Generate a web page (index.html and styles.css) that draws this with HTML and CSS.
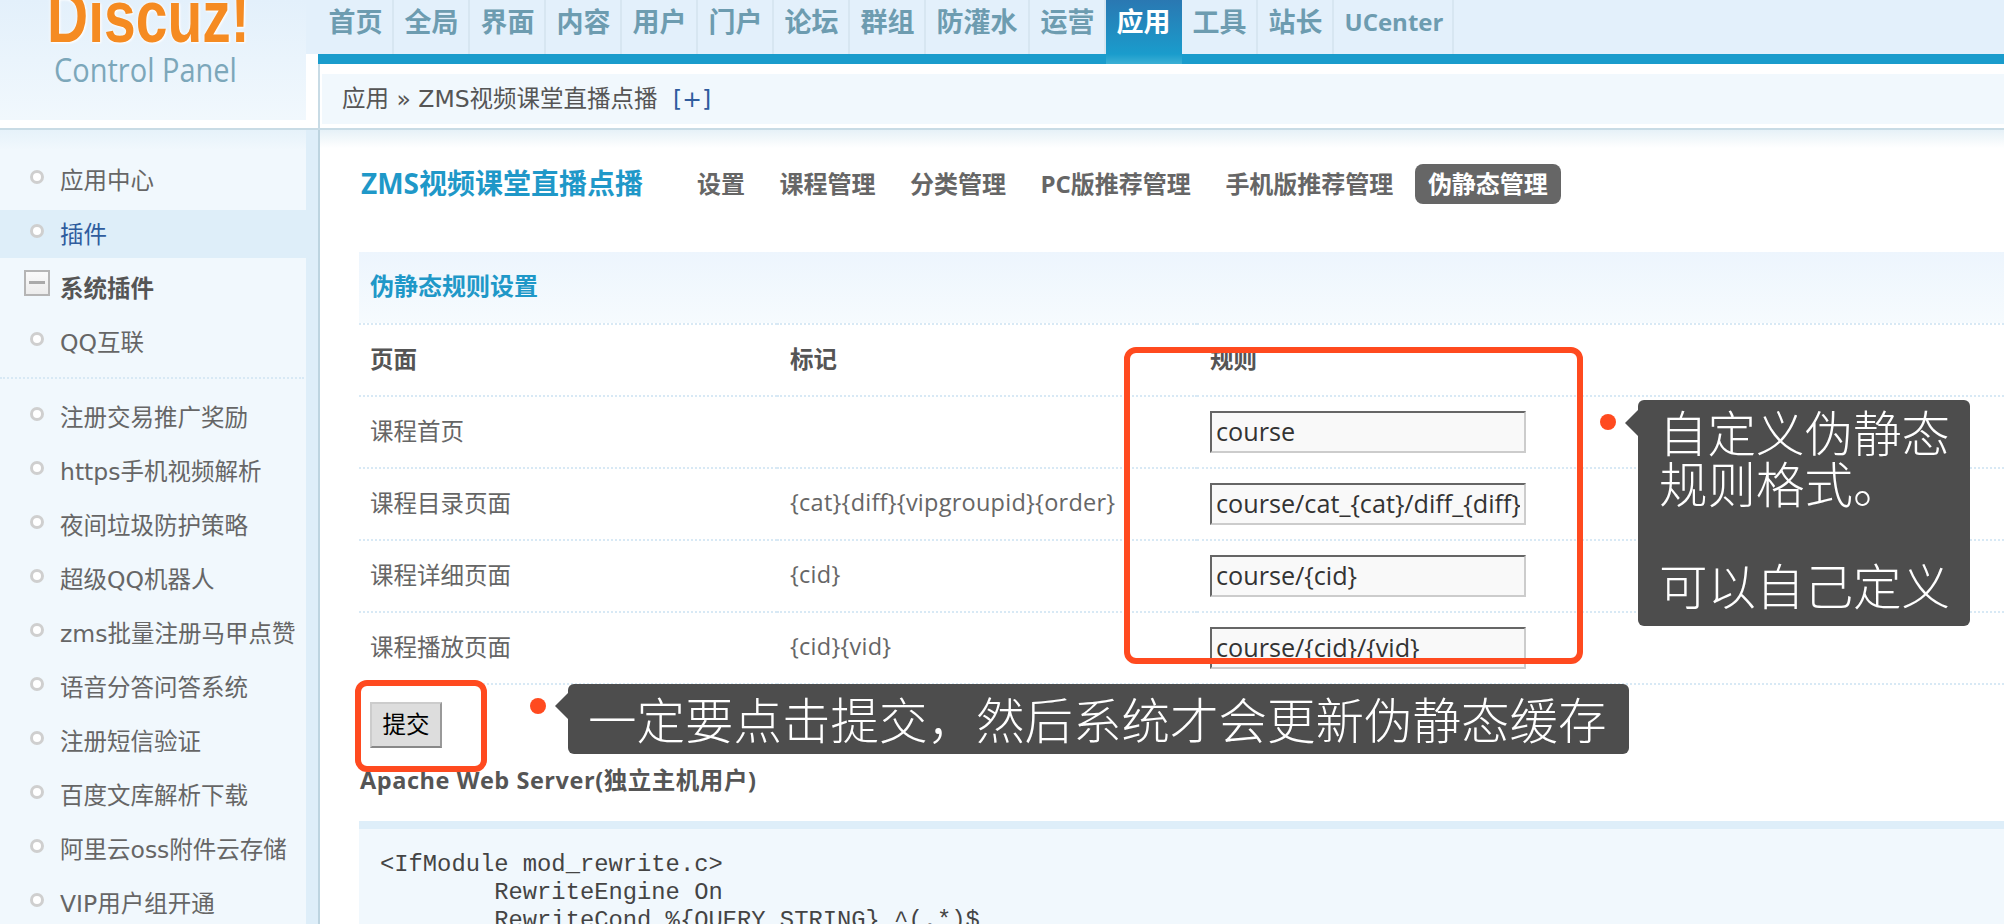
FILE: index.html
```html
<!DOCTYPE html>
<html lang="zh-CN">
<head>
<meta charset="utf-8">
<title>ZMS视频课堂直播点播</title>
<link rel="stylesheet" href="styles.css">
</head>
<body>
<div class="page">
  <header class="top">
    <div class="logo">
      <div class="logo-mark">Discuz!</div>
      <div class="logo-sub">Control Panel</div>
    </div>
    <div class="top-right">
      <nav class="nav">
        <a class="nav-item">首页</a><a class="nav-item">全局</a><a class="nav-item">界面</a><a class="nav-item">内容</a><a class="nav-item">用户</a><a class="nav-item">门户</a><a class="nav-item">论坛</a><a class="nav-item">群组</a><a class="nav-item">防灌水</a><a class="nav-item">运营</a><a class="nav-item active">应用</a><a class="nav-item">工具</a><a class="nav-item">站长</a><a class="nav-item latin">UCenter</a>
      </nav>
      <div class="bar"></div>
      <div class="crumb-wrap">
        <div class="crumb">应用 » ZMS视频课堂直播点播 <span class="plus">[+]</span></div>
      </div>
    </div>
  </header>
  <div class="body">
    <aside class="side">
      <ul class="menu">
        <li class="item"><i class="dot"></i>应用中心</li>
        <li class="item on"><i class="dot"></i>插件</li>
        <li class="item group"><i class="minus"></i>系统插件</li>
        <li class="item"><i class="dot"></i>QQ互联</li>
        <li class="rule"></li>
        <li class="item"><i class="dot"></i>注册交易推广奖励</li>
        <li class="item"><i class="dot"></i>https手机视频解析</li>
        <li class="item"><i class="dot"></i>夜间垃圾防护策略</li>
        <li class="item"><i class="dot"></i>超级QQ机器人</li>
        <li class="item"><i class="dot"></i>zms批量注册马甲点赞</li>
        <li class="item"><i class="dot"></i>语音分答问答系统</li>
        <li class="item"><i class="dot"></i>注册短信验证</li>
        <li class="item"><i class="dot"></i>百度文库解析下载</li>
        <li class="item"><i class="dot"></i>阿里云oss附件云存储</li>
        <li class="item"><i class="dot"></i>VIP用户组开通</li>
      </ul>
    </aside>
    <main class="main">
      <div class="title-row">
        <h1 class="title">ZMS视频课堂直播点播</h1>
        <div class="tabs">
          <a class="tab">设置</a><a class="tab">课程管理</a><a class="tab">分类管理</a><a class="tab">PC版推荐管理</a><a class="tab">手机版推荐管理</a><a class="tab current">伪静态管理</a>
        </div>
      </div>
      <h2 class="section">伪静态规则设置</h2>
      <table class="rules">
        <colgroup><col class="c1"><col class="c2"><col></colgroup>
        <tr class="head"><td>页面</td><td>标记</td><td>规则</td></tr>
        <tr><td>课程首页</td><td></td><td><input class="field" value="course"></td></tr>
        <tr><td>课程目录页面</td><td class="token">{cat}{diff}{vipgroupid}{order}</td><td><input class="field" value="course/cat_{cat}/diff_{diff}"></td></tr>
        <tr><td>课程详细页面</td><td class="token">{cid}</td><td><input class="field" value="course/{cid}"></td></tr>
        <tr><td>课程播放页面</td><td class="token">{cid}{vid}</td><td><input class="field" value="course/{cid}/{vid}"></td></tr>
      </table>
      <div class="submit-row"><button class="submit">提交</button></div>
      <h3 class="sub">Apache Web Server(独立主机用户)</h3>
      <pre class="code">&lt;IfModule mod_rewrite.c&gt;
	RewriteEngine On
	RewriteCond %{QUERY_STRING} ^(.*)$
	RewriteRule ^course$ plugin.php?id=zms</pre>
    </main>
  </div>
  <div class="mark mark-a"></div>
  <div class="mark mark-b"></div>
  <div class="pin pin-a"></div>
  <div class="pin pin-b"></div>
  <div class="note note-a">自定义伪静态<br>规则格式。<br><br>可以自己定义</div>
  <div class="note note-b">一定要点击提交，然后系统才会更新伪静态缓存</div>
</div>
</body>
</html>
```

FILE: styles.css
```css
* { box-sizing: border-box; }
html, body { margin: 0; padding: 0; background: #fff; }
body { font-family: "DejaVu Sans", "Noto Sans CJK SC", sans-serif; font-size: 23.5px; color: #666; }
.page { position: relative; width: 2004px; height: 924px; overflow: hidden; }

.top { display: flex; height: 130px; border-bottom: 2px solid #c8dbe5; }
.logo { width: 306px; height: 128px; flex: none; overflow: hidden; border-bottom: 8px solid #fff; background: linear-gradient(#e3f0fb, #f1f8fd); }
.logo-mark { font-family: "Liberation Sans", sans-serif; font-weight: 700; font-size: 57px; line-height: 46px; height: 46px; margin-left: 47px; color: #f58b22; transform: scaleY(1.3); transform-origin: bottom left; text-shadow: 0 0 3px #fff, 1px 1px 2px #fff; }
.logo-sub { font-family: "Open Sans", sans-serif; font-size: 29px; line-height: 30px; margin: 7px 0 0 54px; color: #7ca7ba; transform: scaleY(1.1); transform-origin: top left; }
.top-right { flex: 1; padding-left: 12px; background: linear-gradient(#e3f0fb 54px, #fff 54px); }
.nav { display: flex; height: 54px; margin-left: -12px; padding-left: 12px; }
.nav-item { display: block; height: 54px; padding: 0 10.5px; font-family: "Open Sans", "Noto Sans CJK SC", sans-serif; font-size: 27px; font-weight: 700; line-height: 44px; color: #6d9cb0; border-right: 2px solid #d7e6f1; width: 76px; white-space: nowrap; }
.nav-item:nth-child(9) { width: 104px; }
.nav-item.active { height: 64px; color: #fff; border-right: 0; background: linear-gradient(#2a78b2, #1a9ccc 54px, #3cb0d5 64px); }
.nav-item.latin { width: 120px; font-size: 24px; }
.bar { height: 10px; background: #1a9ccc; }
.crumb-wrap { height: 64px; padding: 10px 0 0 2px; border-left: 2px solid #c8dbe5; }
.crumb { height: 50px; padding-left: 20px; background: #f1f8fd; line-height: 50px; color: #555; white-space: nowrap; }
.plus { color: #2f5c9e; margin-left: 8px; }

.body { display: flex; height: 794px; }
.side { width: 320px; flex: none; background: #deeef9; border-right: 2px solid #bdd4e0; padding-right: 12px; }
.menu { list-style: none; margin: 0; padding: 26px 0 0; height: 100%; background: linear-gradient(#e6f2fa, #f1f8fd 20px); }
.item { position: relative; height: 48px; margin-bottom: 6px; padding-left: 60px; line-height: 50px; white-space: nowrap; color: #666; }
.item.on { background: #deeef9; color: #2f5c9e; }
.item.group { font-weight: 700; color: #555; }
.dot { position: absolute; left: 30px; top: 14px; width: 14px; height: 14px; border-radius: 50%; background: #fff; border: 3px solid #cfcfcf; }
.minus { position: absolute; left: 24px; top: 6px; width: 26px; height: 26px; border: 2px solid #b5b5b5; background: linear-gradient(#fafafa, #ececec); }
.minus::after { content: ""; position: absolute; left: 3px; right: 3px; top: 9px; height: 3px; background: #aaa; }
.rule { height: 2px; margin: 11px 2px 14px 0; border-top: 2px dotted #d8e9f5; }

.main { flex: 1; min-width: 0; padding-left: 39px; background: linear-gradient(#e6f1f7, #fff 18px); }
.title-row { display: flex; align-items: center; height: 40px; margin-top: 34px; }
.title { width: 325px; margin: 0; flex: none; font-family: "Open Sans", "Noto Sans CJK SC", sans-serif; font-size: 28px; font-weight: 700; line-height: 38px; padding-left: 2px; padding-bottom: 2px; color: #1f98c8; white-space: nowrap; }
.tabs { display: flex; gap: 8.5px; }
.tab { height: 40px; padding: 0 13px; font-family: "Open Sans", "Noto Sans CJK SC", sans-serif; font-size: 24px; line-height: 40px; font-weight: 700; color: #666; border-radius: 8px; white-space: nowrap; }
.tab.current { background: #666; color: #fff; }
.section { height: 71px; margin: 48px 0 0; padding-left: 11px; font-size: 24px; font-weight: 700; line-height: 71px; color: #1f98c8; background: linear-gradient(#edf5fd, #f6fbfe); }
.rules { width: 100%; table-layout: fixed; border-collapse: collapse; border-top: 2px dotted #d8e9f5; }
.rules td { height: 72px; padding: 0 0 4px 13px; border-bottom: 2px dotted #d8e9f5; vertical-align: middle; white-space: nowrap; }
.rules td:first-child { padding-left: 11px; }
.rules td.token { font-family: "Open Sans", sans-serif; letter-spacing: 0.25px; }
.c1 { width: 418px; }
.c2 { width: 420px; }
.head td { font-weight: 700; color: #555; }
.field { display: block; width: 316px; height: 42px; margin-top: 4px; padding: 0 4px 2px; font-family: "Open Sans", sans-serif; font-size: 25.2px; color: #333; background: #f9f9f9; border: 2px solid; border-color: #666 #ccc #ccc #666; border-radius: 0; outline: 0; }
.submit-row { height: 72px; padding: 17px 0 0 11px; }
.submit { display: block; width: 72px; height: 46px; padding: 0 0 4px; font: inherit; color: #000; background: #ddd; border: 2px solid; border-color: #ccc #999 #888 #ccc; border-radius: 0; }
.sub { height: 24px; margin: 11px 0 0 1px; font-family: "Open Sans", "Noto Sans CJK SC", sans-serif; font-size: 23.5px; letter-spacing: 0.55px; line-height: 24px; font-weight: 700; color: #555; white-space: nowrap; }
.code { margin: 29px 0 0; padding: 22px 21px; border-top: 8px solid #deeef9; background: #f1f8fd; font-family: "Liberation Mono", monospace; font-size: 23.8px; line-height: 28px; color: #444; tab-size: 8; }

.mark { position: absolute; border: 6px solid #ff4a1f; border-radius: 12px; }
.mark-a { left: 1124px; top: 347px; width: 459px; height: 317px; }
.mark-b { left: 355px; top: 680px; width: 132px; height: 92px; }
.pin { position: absolute; width: 16px; height: 16px; border-radius: 50%; background: #ff4a1f; }
.pin-a { left: 1600px; top: 414px; }
.pin-b { left: 530px; top: 698px; }
.note { position: absolute; background: #4d4d4d; border-radius: 6px; color: #fff; font-family: "Noto Sans CJK SC", sans-serif; font-size: 48.5px; font-weight: 300; white-space: nowrap; }
.note::before { content: ""; position: absolute; left: -13px; width: 0; height: 0; border: 13px solid transparent; border-left: 0; border-right-color: #4d4d4d; }
.note-a { left: 1638px; top: 400px; width: 332px; height: 226px; line-height: 51px; padding: 6px 0 0 21px; }
.note-a::before { top: 10px; }
.note-b { left: 568px; top: 684px; width: 1061px; height: 70px; line-height: 68px; padding-left: 20px; }
.note-b::before { top: 9px; }
```
